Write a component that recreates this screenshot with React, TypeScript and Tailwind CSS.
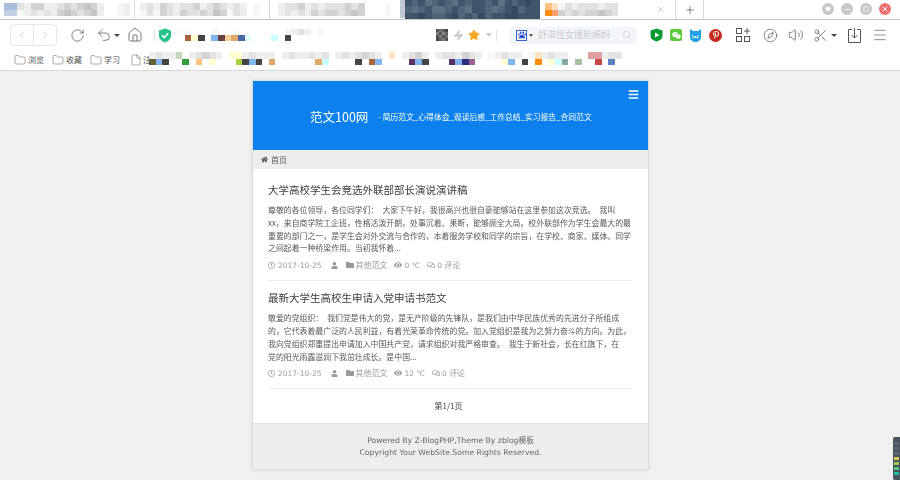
import React from "react";
import { ChevronLeft, ChevronRight, RotateCw, Undo2, House, Zap, Star, Search, Compass, Volume2, Scissors, Menu, X, Plus, Folder, File, Minus, Square, Heart } from "lucide-react";
import { FaHome, FaRegClock, FaUser, FaFolder, FaEye, FaRegComments, FaBars, FaPaw, FaWeixin, FaPinterestP } from "react-icons/fa";

const cjk = "font-['Noto_Sans_CJK_SC','Liberation_Sans',sans-serif]";

const palette: Record<string, string> = {
  ".": "transparent", a: "#f7f7f7", b: "#eeeeee", c: "#e2e2e2", d: "#d2d2d2", e: "#c4c4c4",
  B: "#a9bddb", C: "#c3d0e4", k: "#454545", r: "#a9673f", s: "#7fb2ee", m: "#6b4044",
  o: "#f5cf98", t: "#e3a968", n: "#4a68a8", i: "#dffbfd", y: "#fffdd2", g: "#34a03a",
  l: "#a8d040", p: "#5c3060", v: "#ffc080", w: "#e0a868", f: "#606030", u: "#2e2e80",
  h: "#a06090", q: "#88a8a0", x: "#a8c0a0", z: "#c84848", j: "#5b7fc0", O: "#ff8a10", A: "#ffa070", G: "#c8d8c0",
  D: "#3f566a", E: "#4f6678", F: "#5c7283", H: "#354c60", R: "#e0a0a0", T: "#ffe0c0", S: "#7fb8f0", I: "#c8ffff",
};

// a mosaic strip for the parts of the screenshot that are pixelated out
function Strip({ rows, cell = 6.67, h = 6.5 }: { rows: string[]; cell?: number; h?: number }) {
  return (
    <div className="flex flex-col shrink-0">
      {rows.map((row, i) => (
        <div key={i} className="flex">
          {row.split("").map((c, j) => (
            <span key={j} style={{ width: cell, height: h, background: palette[c] }} />
          ))}
        </div>
      ))}
    </div>
  );
}

function Tab({ rows, className = "" }: { rows: string[]; className?: string }) {
  return (
    <div className={`w-[135px] h-[19px] bg-white flex items-center border-r border-[#d8dbe2] ${className}`}>
      <Strip rows={rows} />
    </div>
  );
}

function TabBar() {
  return (
    <div className="h-[20px] bg-white border-b border-[#c8c8c8] flex">
      <Tab rows={["BBcbddbbcdcdedb..ab", "CCabcbcbdedcdeb..ab"]} className="pl-[4px]" />
      <Tab rows={["bcbdcbccdbcdcbcb.a", "acadcbdccdcedacb.a"]} className="pl-[5px]" />
      <div className="w-[135px] h-[19px] bg-white flex items-center pl-[8px] relative">
        <Strip rows={["bccdbcbcccdcd...a", "bcbcbdcddcded...a"]} />
        <span className="absolute right-0 top-0 h-[18px] w-[5px] bg-[#c4c8d0]" />
      </div>
      <div className="w-[135px] h-[19px] bg-[#3f566a] flex items-center overflow-hidden">
        <Strip rows={["DEDFEDEFDEDDEDFDEDHDD", "EFEDFFEDEFDDEFEDHEDDD", "DDHDEEDHEDEHEDDHHDDDD"]} h={6.4} />
      </div>
      <div className="w-[136px] h-[19px] bg-white flex items-center pl-[5px] pr-[10px] border-r border-[#d8dbe2]">
        <Strip rows={["vTacbcccbcc", "OAdcdcddedc"]} />
        <div className="flex-1" />
        <X size={9} className="text-[#999]" strokeWidth={1.3} />
      </div>
      <div className="w-[28px] h-[19px] bg-white flex items-center justify-center border-r border-[#d8dbe2]">
        <Plus size={12} className="text-[#444]" strokeWidth={1.3} />
      </div>
      <div className="flex-1" />
      <div className="flex items-center gap-[7px] pr-[9px] pb-[1px]">
        <span className="w-[12px] h-[12px] rounded-full bg-[#c8c8c8] flex items-center justify-center"><Heart size={6} className="text-white" fill="white" /></span>
        <span className="w-[12px] h-[12px] rounded-full bg-[#c8c8c8] flex items-center justify-center"><Minus size={7} className="text-white" strokeWidth={3} /></span>
        <span className="w-[12px] h-[12px] rounded-full bg-[#c8c8c8] flex items-center justify-center"><Square size={6} className="text-white" strokeWidth={2.5} /></span>
        <span className="w-[12px] h-[12px] rounded-full bg-[#f07070] flex items-center justify-center"><X size={8} className="text-white" strokeWidth={3} /></span>
      </div>
    </div>
  );
}

function QrCode() {
  return (
    <div className="w-[12px] h-[12px] grid grid-cols-4 grid-rows-4 mr-[3px]">
      {[6, 8, 7, 5, 9, 6, 10, 7, 6, 9, 6, 8, 5, 7, 9, 6].map((v, i) => (
        <span key={i} style={{ background: `rgb(${v * 14},${v * 14},${v * 14})` }} />
      ))}
    </div>
  );
}

function ShieldIcon() {
  return (
    <svg width="14" height="15" viewBox="0 0 14 15" className="ml-[3px] shrink-0">
      <path d="M7 0.5 L13 2.5 V8 C13 11 10 13.5 7 14.5 C4 13.5 1 11 1 8 V2.5 Z" fill="#25c28a" />
      <path d="M4 7.2 L6.3 9.5 L10.2 5.2" fill="none" stroke="#fff" strokeWidth="1.6" />
    </svg>
  );
}

function AppsIcon() {
  return (
    <svg width="14" height="14" viewBox="0 0 14 14" fill="none" stroke="#555" strokeWidth="1" className="ml-[14px] shrink-0">
      <rect x="0.5" y="0.5" width="5" height="5" />
      <rect x="0.5" y="8.5" width="5" height="5" />
      <rect x="8.5" y="8.5" width="5" height="5" />
      <path d="M11 0 V6 M8 3 H14" />
    </svg>
  );
}

function DownloadIcon() {
  return (
    <svg width="13" height="15" viewBox="0 0 13 15" fill="none" stroke="#555" strokeWidth="1" className="ml-[11px] shrink-0">
      <path d="M4 1.5 H0.5 V14.5 H12.5 V1.5 H9" />
      <path d="M6.5 0 V10 M3.5 7 L6.5 10 L9.5 7" />
    </svg>
  );
}

function Toolbar() {
  return (
    <div className="h-[30px] bg-white flex items-center text-[#555]">
      <div className="ml-[10px] w-[47px] h-[22px] border border-[#e6e6e6] rounded-[4px] flex shrink-0">
        <div className="flex-1 flex items-center justify-center border-r border-[#e6e6e6]"><ChevronLeft size={14} className="text-[#ccc]" strokeWidth={1.3} /></div>
        <div className="flex-1 flex items-center justify-center"><ChevronRight size={14} className="text-[#ccc]" strokeWidth={1.3} /></div>
      </div>
      <RotateCw size={15} strokeWidth={1.2} className="ml-[13px] shrink-0" />
      <Undo2 size={16} strokeWidth={1.1} className="ml-[11px] shrink-0" />
      <span className="ml-[2px] w-0 h-0 border-x-[3px] border-x-transparent border-t-[3px] border-t-[#444] shrink-0" />
      <House size={16} strokeWidth={1.2} className="ml-[7px] shrink-0" />
      <span className="ml-[11px] w-px h-[11px] bg-[#ddd] shrink-0" />
      <ShieldIcon />
      <div className="ml-[6px] shrink-0">
        <Strip rows={["aa...a..a.......abcb.a", ".ryk.smotni...I.k....."]} h={6} />
      </div>
      <div className="flex-1" />
      <QrCode />
      <Zap size={11} className="ml-[2px] text-[#ccc] fill-[#ccc] shrink-0" />
      <Star size={12} className="ml-[4px] text-[#f5a623] fill-[#f5a623] shrink-0" />
      <span className="ml-[6px] w-0 h-0 border-x-[3px] border-x-transparent border-t-[4px] border-t-[#ccc] shrink-0" />
      <span className="ml-[4px] w-px h-[11px] bg-[#e4e4e4] shrink-0" />
      <div className="ml-[12px] w-[128px] h-[17px] rounded-[4px] bg-[#f3f5f8] flex items-center pl-[7px] pr-[5px] shrink-0">
        <span className="w-[11px] h-[11px] border border-[#3a5fd0] bg-white flex items-center justify-center shrink-0"><FaPaw size={8} className="text-[#2a50d8]" /></span>
        <span className="ml-[2px] w-0 h-0 border-x-[2.5px] border-x-transparent border-t-[3px] border-t-[#555] shrink-0" />
        <span className={`ml-[5px] text-[9px] text-[#c8cbd0] whitespace-nowrap ${cjk}`}>舒淇侄女撞脸嫣妈</span>
        <div className="flex-1" />
        <Search size={10} className="text-[#c4c8cc] shrink-0" strokeWidth={1.4} />
      </div>
      <svg width="13" height="14" viewBox="0 0 13 14" className="ml-[13px] shrink-0">
        <path d="M6.5 0.5 L12.5 2.5 V8 C12.5 11 9 13 6.5 13.5 C4 13 0.5 11 0.5 8 V2.5 Z" fill="#0a9c32" />
        <path d="M5 4.5 L9.5 7 L5 9.5 Z" fill="#fff" />
      </svg>
      <span className="ml-[7px] w-[12px] h-[12px] rounded-[2px] bg-[#5cc83a] flex items-center justify-center shrink-0"><FaWeixin size={9} className="text-white" /></span>
      <svg width="11" height="13" viewBox="0 0 11 13" className="ml-[8px] shrink-0">
        <path d="M0 0 L3 2 H8 L11 0 V8 C11 11 8 13 5.5 13 C3 13 0 11 0 8 Z" fill="#22a0e8" />
        <path d="M3 6 V8.5 H5.5 V7 M5.5 8.5 H8 V6" fill="none" stroke="#fff" strokeWidth="0.9" />
      </svg>
      <span className="ml-[8px] w-[13px] h-[13px] rounded-full bg-[#c8281e] flex items-center justify-center shrink-0"><FaPinterestP size={8} className="text-white" /></span>
      <AppsIcon />
      <Compass size={15} strokeWidth={1.1} className="ml-[13px] shrink-0" />
      <Volume2 size={16} strokeWidth={1.1} className="ml-[10px] shrink-0" />
      <Scissors size={15} strokeWidth={1.1} className="ml-[9px] shrink-0" />
      <span className="ml-[3px] w-0 h-0 border-x-[3px] border-x-transparent border-t-[3px] border-t-[#444] shrink-0" />
      <DownloadIcon />
      <Menu size={16} strokeWidth={1} className="ml-[11px] mr-[12px] shrink-0" />
    </div>
  );
}

function Bookmark({ label }: { label: string }) {
  return (
    <div className={`w-[38px] flex items-center gap-[2px] text-[8px] text-[#555] ${cjk}`}>
      <Folder size={12} strokeWidth={1} className="text-[#555] shrink-0" />
      <span>{label}</span>
    </div>
  );
}

function BookmarkBar() {
  return (
    <div className="h-[21px] bg-white border-b border-[#d8d8dc] flex items-center pl-[14px] overflow-hidden">
      <Bookmark label="浏览" />
      <Bookmark label="收藏" />
      <Bookmark label="学习" />
      <div className={`ml-[2px] w-[19px] flex items-center gap-[1px] text-[8px] text-[#555] shrink-0 ${cjk}`}>
        <File size={12} strokeWidth={1} className="text-[#555] shrink-0" />
        <span>注</span>
      </div>
      <div className="self-start mt-[2px]">
        <Strip rows={[
          "bcbbG.bcdcb.yybcbbb.bcbbcbc.bcbcdcb.T.bcdb.bccbdcb.abcbb.aTbcbb...RRbcc",
          "fSk..g.v.y...lkSk.w......tI....k.rS....pSk...psuh....yS.k.O.yIq.x..z.j",
        ]} />
      </div>
    </div>
  );
}

function Meta({ views, comments }: { views: string; comments: string }) {
  return (
    <div className="mt-[4px] h-[12px] flex items-center text-[8px] text-[#999] whitespace-nowrap">
      <FaRegClock size={7} />
      <span className="ml-[3px] font-['DejaVu_Sans',sans-serif] text-[7.5px]">2017-10-25</span>
      <FaUser size={7} className="ml-[9px]" />
      <FaFolder size={8} className="ml-[8px]" />
      <span className="ml-[2px]">其他范文</span>
      <FaEye size={8} className="ml-[6px]" />
      <span className="ml-[3px] font-['DejaVu_Sans',sans-serif] text-[7.5px]">{views} ℃</span>
      <FaRegComments size={8} className="ml-[7px]" />
      <span className="ml-[2px] font-['DejaVu_Sans',sans-serif] text-[7.5px]">{comments} <span className={`${cjk} text-[8px]`}>评论</span></span>
    </div>
  );
}

function Post({ title, lines, views, last }: { title: string; lines: string[]; views: string; last?: boolean }) {
  return (
    <article className={`ml-[15px] mr-[16px] pb-[9px] border-b border-[#eeeeee] ${last ? "pt-[9px]" : "pt-[13px]"}`}>
      <h2 className="text-[10.5px] leading-[16px] font-normal text-[#3c3c3c]">{title}</h2>
      <div className="mt-[6px] text-[7.9px] leading-[12.8px] text-[#585858] whitespace-nowrap">
        {lines.map((line) => (
          <p key={line}>{line}</p>
        ))}
      </div>
      <Meta views={views} comments="0" />
    </article>
  );
}

function Side() {
  return (
    <div className="absolute right-0 bottom-0 w-[7px] h-[43px] bg-[#4a5260] rounded-l-[2px] flex flex-col items-center gap-[2px] pt-[5px]">
      <span className="w-[5px] h-[3px] bg-[#5c6470]" />
      <span className="w-[5px] h-[3px] bg-[#5c6470]" />
      <span className="w-[5px] h-[3px] bg-[#5c6470]" />
      <span className="w-[5px] h-[3px] bg-[#d8c850]" />
      <span className="w-[5px] h-[3px] bg-[#a0c850]" />
      <span className="w-[5px] h-[3px] bg-[#50c878]" />
      <span className="w-[5px] h-[3px] bg-[#20b8a0]" />
    </div>
  );
}

export default function App() {
  return (
    <div className={`relative w-[900px] h-[480px] bg-[#f0f0f0] overflow-hidden ${cjk}`}>
      <TabBar />
      <Toolbar />
      <BookmarkBar />
      <main className="mt-[9px] ml-[252px] w-[397px] h-[390px] border border-[#dddddd] shadow-[0_0_3px_rgba(0,0,0,0.1)] flex flex-col blur-[0.3px]">
        <header className="h-[69px] shrink-0 bg-[#0c80ec] relative flex items-center pl-[57px] pt-[3px] text-white">
          <span className="text-[12.5px]">范文100网</span>
          <span className="ml-[10px] text-[7.8px]">- 简历范文_心得体会_观读后感_工作总结_实习报告_合同范文</span>
          <FaBars size={11} className="absolute right-[9px] top-[8px]" />
        </header>
        <div className="h-[19px] shrink-0 bg-[#eeeeee] flex items-center pl-[8px] gap-[3px] text-[8px] text-[#555]">
          <FaHome size={7} className="text-[#555]" />
          <span>首页</span>
        </div>
        <div className="flex-1 bg-white flex flex-col">
          <Post
            title="大学高校学生会竞选外联部部长演说演讲稿"
            views="0"
            lines={[
              "尊敬的各位领导，各位同学们：　大家下午好，我很高兴也很自豪能够站在这里参加这次竞选。　我叫",
              "xx，来自商学院工企班，性格活泼开朗，处事沉着、果断，能够顾全大局。校外联部作为学生会最大的最",
              "重要的部门之一，是学生会对外交流与合作的，本着服务学校和同学的宗旨，在学校、商家、媒体、同学",
              "之间起着一种桥梁作用。当初我怀着...",
            ]}
          />
          <Post
            last
            title="最新大学生高校生申请入党申请书范文"
            views="12"
            lines={[
              "敬爱的党组织：　我们党是伟大的党，是无产阶级的先锋队，是我们由中华民族优秀的先进分子所组成",
              "的，它代表着最广泛的人民利益，有着光荣革命传统的党。加入党组织是我为之努力奋斗的方向。为此，",
              "我向党组织郑重提出申请加入中国共产党，请求组织对我严格审查。　我生于新社会，长在红旗下，在",
              "党的阳光雨露滋润下我茁壮成长。是中国...",
            ]}
          />
          <div className="flex-1 flex items-center justify-center pr-[4px] text-[8px] text-[#444]">第1/1页</div>
        </div>
        <footer className="h-[46px] shrink-0 bg-[#eeeeee] border-t border-[#e4e4e4] flex flex-col items-center justify-center pt-[1px] text-[7.7px] leading-[12.5px] text-[#666] font-['DejaVu_Sans','Noto_Sans_CJK_SC',sans-serif]">
          <span>Powered By Z-BlogPHP,Theme By zblog模板</span>
          <span>Copyright Your WebSite.Some Rights Reserved.</span>
        </footer>
      </main>
      <Side />
    </div>
  );
}
